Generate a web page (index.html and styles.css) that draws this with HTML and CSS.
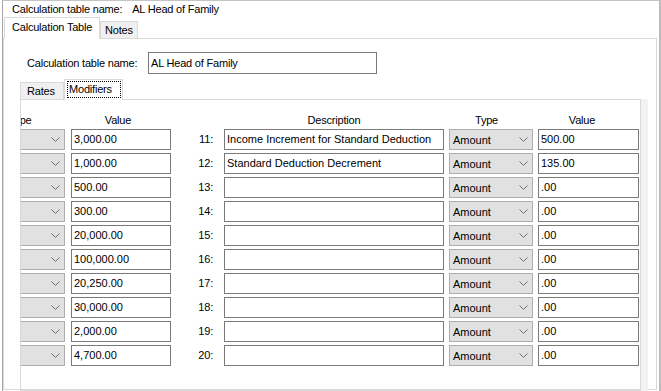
FILE: index.html
```html
<!DOCTYPE html>
<html lang="en">

<head>
    <meta charset="UTF-8">
    <title>Calculation Table</title>
    <link rel="stylesheet" href="styles.css">
</head>

<body>
    <div class="window">
        <div class="title-row">
            <span>Calculation table name:</span>
            <span class="title-value">AL Head of Family</span>
        </div>

        <div class="tabs">
            <div class="tab active">Calculation Table</div>
            <div class="tab">Notes</div>
        </div>

        <div class="panel">
            <div class="name-row">
                <label class="name-label">Calculation table name:</label>
                <div class="field name-field">AL Head of Family</div>
            </div>

            <div class="subtabs">
                <div class="subtab">Rates</div>
                <div class="subtab active"><span class="focus">Modifiers</span></div>
            </div>

            <div class="subpanel">
                <div class="grid" id="grid">
                    <div class="head head-left">Type</div>
                    <div class="head">Value</div>
                    <div class="head"></div>
                    <div class="head">Description</div>
                    <div class="head head-type">Type</div>
                    <div class="head head-value">Value</div>
                </div>
            </div>
        </div>
    </div>

    <script>
        // left side values are rows 1-10, right side rows 11-20
        const leftValues = ["3,000.00", "1,000.00", "500.00", "300.00", "20,000.00",
            "100,000.00", "20,250.00", "30,000.00", "2,000.00", "4,700.00"];
        const rightRows = [
            { desc: "Income Increment for Standard Deduction", value: "500.00" },
            { desc: "Standard Deduction Decrement", value: "135.00" }
        ];

        const chevron = '<svg class="chevron" width="9" height="5" viewBox="0 0 9 5"><polyline points="0.5,0.5 4.5,4.5 8.5,0.5" fill="none" stroke="#6d6d6d" stroke-width="1"/></svg>';

        const grid = document.getElementById('grid');
        leftValues.forEach((val, i) => {
            const right = rightRows[i] || { desc: "", value: ".00" };
            grid.insertAdjacentHTML('beforeend', `
                <div class="select">${chevron}</div>
                <div class="field value">${val}</div>
                <div class="num">${i + 11}:</div>
                <div class="field desc">${right.desc}</div>
                <div class="select"><span>Amount</span>${chevron}</div>
                <div class="field value wide">${right.value}</div>
            `);
        });
    </script>
</body>

</html>
```

FILE: styles.css
```css
body {
    margin: 0;
    background: #fff;
    font-family: 'Liberation Sans', Arial, sans-serif;
    font-size: 11px;
    letter-spacing: -0.2px;
    color: #000;
    overflow: hidden;
    white-space: nowrap;
}

.window {
    margin-left: 2px;
    width: 656px;
    height: 400px;
    border-top: 1px solid #c4c4c4;
    border-left: 1px solid #a8a8a8;
    border-right: 2px solid #bcbcbc;
}

.title-row {
    height: 17px;
    line-height: 17px;
    padding-left: 9px;
}

.title-value {
    margin-left: 7px;
}

.tabs {
    display: flex;
    align-items: flex-end;
    height: 20px;
    padding-left: 1px;
}

.tab {
    height: 16px;
    line-height: 17px;
    padding: 0 4px;
    background: #f0f0f0;
    border: 1px solid #d9d9d9;
    border-bottom: none;
}

.tab.active {
    width: 87px;
    height: 21px;
    line-height: 19px;
    padding: 0 0 0 7px;
    background: #fff;
    position: relative;
    z-index: 1;
    margin-bottom: -1px;
}

.panel {
    width: 652px;
    height: 350px;
    border: 1px solid #d9d9d9;
}

.name-row {
    display: flex;
    align-items: center;
    margin-top: 13px;
    padding-left: 23px;
}

.name-label {
    width: 121px;
    flex-shrink: 0;
}

.field {
    box-sizing: border-box;
    height: 21px;
    line-height: 19px;
    padding-left: 2px;
    border: 1px solid #7a7a7a;
    background: #fff;
    letter-spacing: 0;
    overflow: hidden;
}

.name-field {
    width: 229px;
    height: 22px;
    line-height: 20px;
    letter-spacing: -0.2px;
}

.subtabs {
    display: flex;
    align-items: flex-end;
    height: 20px;
    margin-top: 5px;
    padding-left: 16px;
}

.subtab {
    width: 36px;
    height: 16px;
    line-height: 17px;
    padding-left: 6px;
    background: #f0f0f0;
    border: 1px solid #d9d9d9;
    border-bottom: none;
}

.subtab.active {
    width: 55px;
    height: 20px;
    padding: 0 0 0 2px;
    background: #fff;
    position: relative;
    z-index: 1;
    margin-bottom: -1px;
}

.focus {
    display: block;
    width: 51px;
    height: 15px;
    margin-top: 1px;
    line-height: 15px;
    padding-left: 1px;
    border: 1px dotted #000;
}

.subpanel {
    width: 619px;
    height: 290px;
    margin-left: 16px;
    border: 1px solid #d9d9d9;
    box-shadow: 7px 0 0 #f2f2f2;
    overflow: hidden;
}

.grid {
    display: grid;
    grid-template-columns: 84px 106px 53px 220px 89px 106px;
    grid-template-rows: 13px;
    grid-auto-rows: 21px;
    row-gap: 3px;
    margin: 13px 0 0 -40px;
}

.head {
    line-height: 15px;
    text-align: center;
}

.head-left {
    padding-right: 6px;
}

.head-type {
    padding-right: 4px;
}

.head-value {
    padding-right: 8px;
}

.select {
    box-sizing: border-box;
    display: flex;
    align-items: center;
    width: 84px;
    height: 21px;
    padding: 0 4px 0 3px;
    background: #e1e1e1;
    border: 1px solid #adadad;
    letter-spacing: 0;
    justify-self: end;
}

.chevron {
    margin-left: auto;
}

.value {
    width: 100px;
    justify-self: end;
}

.value.wide {
    width: 101px;
}

.num {
    line-height: 21px;
    text-align: right;
    padding-right: 11px;
}

.desc {
    width: 220px;
}
```
